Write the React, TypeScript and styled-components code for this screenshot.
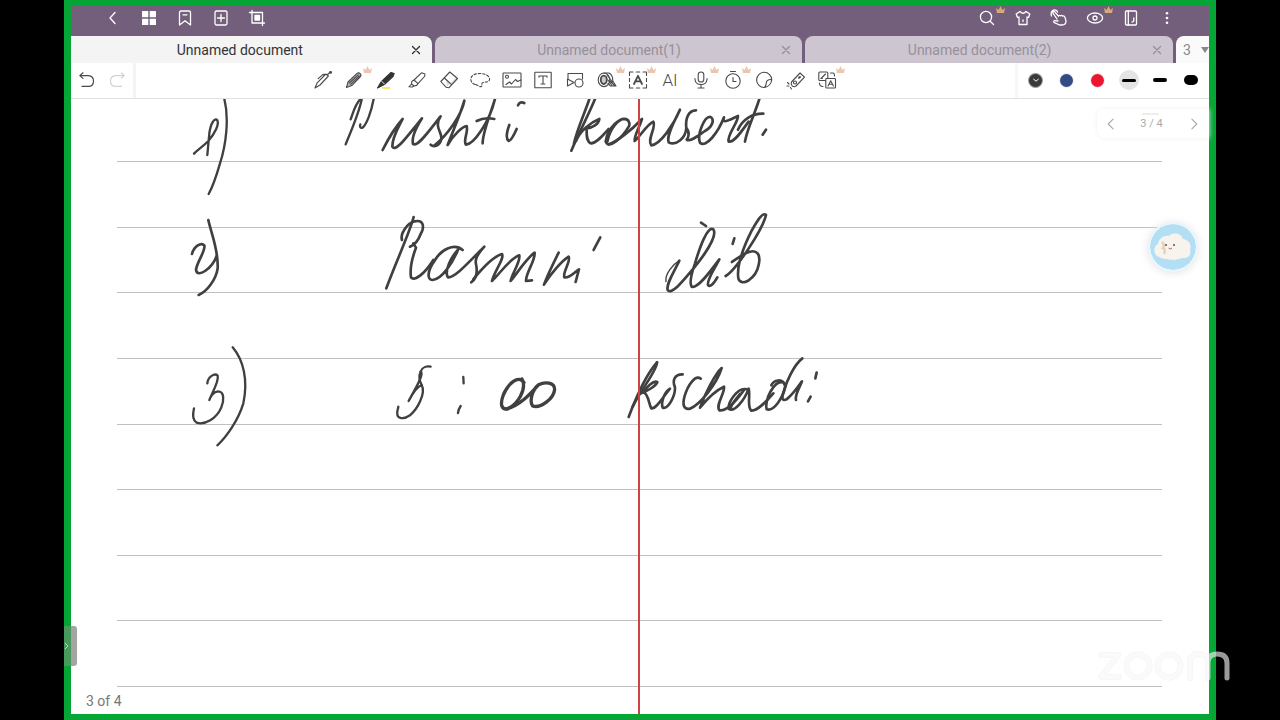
import React from "react";
import styled, { createGlobalStyle, css } from "styled-components";

const GlobalStyle = createGlobalStyle`
  *, *::before, *::after { box-sizing: border-box; }
  body { margin: 0; background: #000; font-family: Roboto, "Liberation Sans", sans-serif; }
  button { font: inherit; color: inherit; border: 0; padding: 0; background: none; cursor: pointer; }
`;

const Stage = styled.div`
  position: relative;
  min-height: 100vh;
  padding: 0 5%;
  display: flex;
`;

const SharedScreen = styled.main`
  position: relative;
  flex: 1;
  min-width: 0;
  display: flex;
  flex-direction: column;
  border: 7px solid #05a536;
  border-top-width: 6px;
  border-bottom-width: 6px;
  background: #fff;
`;

const Header = styled.header`
  display: flex;
  justify-content: space-between;
  height: 30px;
  padding: 0 24px;
  background: #735f7b;
  color: #fff;
`;

const IconGroup = styled.div`
  display: flex;
`;

const HeaderButton = styled.button`
  position: relative;
  display: grid;
  place-items: center;
  width: 36px;
  height: 24px;
`;

const Crown = styled.svg<{ $soft?: boolean }>`
  position: absolute;
  top: 0;
  left: calc(50% + 9px);
  width: 9px;
  height: 8px;
  fill: ${(p) => (p.$soft ? "#ecc5af" : "#d9a878")};
`;

const Tabs = styled.nav`
  display: grid;
  grid-template-columns: 361fr 368fr 368fr 33px;
  gap: 3px;
  height: 27px;
  background: #735f7b;
`;

const Tab = styled.div<{ $active?: boolean }>`
  display: flex;
  align-items: center;
  min-width: 0;
  padding: 0 9px 0 4px;
  border-radius: 8px 8px 0 0;
  background: #cdc6d0;
  color: #97909a;
  ${(p) =>
    p.$active &&
    css`
      padding-left: 0;
      border-radius: 0 8px 0 0;
      background: #f4f4f5;
      color: #333;
    `}
`;

const TabTitle = styled.button`
  flex: 1;
  min-width: 0;
  overflow: hidden;
  white-space: nowrap;
  font-size: 14px;
  line-height: 24px;
`;

const TabClose = styled.button`
  display: grid;
  place-items: center;
  width: 14px;
  height: 20px;
`;

const TabCount = styled.button`
  && {
    display: flex;
    align-items: center;
    justify-content: space-between;
    padding: 0 0 0 7px;
    border-radius: 8px 0 0 0;
    background: #fafafa;
    color: #888;
    font-size: 14px;
  }
`;

const Toolbar = styled.div`
  display: flex;
  height: 36px;
  border-bottom: 1px solid #e2e2e2;
  background: #fff;
  color: #4a4a4a;
`;

const History = styled.div`
  display: flex;
  width: 65px;
  padding: 0 0 1px 1px;
  border-right: 3px solid #f4f4f4;
`;

const ToolArea = styled.div`
  flex: 1;
  min-width: 0;
  display: flex;
  justify-content: center;
  padding: 0 1px 1px 0;
`;

const ToolList = styled.div`
  flex: 0 1 536px;
  display: flex;
`;

const ToolButton = styled.button`
  position: relative;
  flex: 1;
  min-width: 0;
  display: grid;
  place-items: center;
`;

const PenOptions = styled.div`
  display: flex;
  width: 194px;
  padding: 0 0 1px 2px;
  border-left: 3px solid #f7f7f7;
`;

const PenOption = styled.button`
  display: grid;
  place-items: center;
  width: 31px;
`;

const Swatch = styled.span<{ $color: string; $ring?: boolean }>`
  display: grid;
  place-items: center;
  width: 13px;
  height: 13px;
  border-radius: 50%;
  background: ${(p) => p.$color};
  box-shadow: ${(p) => (p.$ring ? "0 0 0 1px #999" : "0 0 0 1px #eee")};
`;

const StrokeChoice = styled.span<{ $selected?: boolean }>`
  display: grid;
  place-items: center;
  width: 20px;
  height: 20px;
  border-radius: 50%;
  background: ${(p) => (p.$selected ? "#e4e4e4" : "transparent")};
`;

const StrokeSample = styled.span<{ $weight: number }>`
  width: 14px;
  height: ${(p) => p.$weight}px;
  border-radius: 5px;
  background: #000;
`;

const Paper = styled.section`
  position: relative;
  flex: 1;
  min-height: 615px;
  display: flex;
  flex-direction: column;
  background: #fff;
`;

const Rule = styled.div<{ $first?: boolean }>`
  flex: ${(p) => (p.$first ? "0 0 63px" : "1 0 auto")};
  margin: 0 47px 0 46px;
  border-bottom: 1px solid #c0c0c0;
`;

const PageFooter = styled.footer`
  height: 27px;
  padding-left: 15px;
  font-size: 14px;
  line-height: 28px;
  color: #777;
`;

const MarginLine = styled.div`
  position: absolute;
  top: 0;
  bottom: 0;
  left: 50%;
  width: 2px;
  margin-left: -2px;
  background: #cf4145;
`;

const Ink = styled.svg`
  position: absolute;
  top: 0;
  left: 0;
  width: 100%;
  height: 615px;
  fill: none;
  stroke: #404040;
  stroke-linecap: round;
  stroke-linejoin: round;
`;

const Pager = styled.div`
  position: absolute;
  top: 10px;
  right: 0;
  display: flex;
  align-items: center;
  justify-content: space-between;
  width: 112px;
  height: 29px;
  padding: 0 10px 0 7px;
  border-radius: 8px 0 0 8px;
  background: #fff;
  box-shadow: 0 0 5px #f0f0f0;
  color: #aaa;
  font-size: 11px;
`;

const PagerButton = styled.button`
  display: grid;
  place-items: center;
  width: 12px;
  height: 20px;
`;

const PagerHandle = styled.span`
  position: absolute;
  top: 4px;
  left: 45px;
  width: 17px;
  height: 2px;
  background: #ededed;
`;

const Assistant = styled.button`
  && {
    position: absolute;
    top: 123px;
    right: 11px;
    width: 50px;
    height: 50px;
    border: 2px solid #e9f6fd;
    border-radius: 50%;
    background: #b2dff4;
    background-clip: padding-box;
    box-shadow: 0 1px 10px #e3e3e3;
  }
`;

const DrawerHandle = styled.button`
  && {
    position: absolute;
    left: -7px;
    bottom: 48px;
    width: 13px;
    height: 40px;
    display: flex;
    align-items: center;
    border-radius: 0 3px 3px 0;
    background: linear-gradient(to right, #479a5c 7px, #a3a5a3 7px);
  }
`;

const Watermark = styled.svg`
  position: absolute;
  right: 48px;
  bottom: 36px;
  width: 136px;
  height: 36px;
  fill: none;
  stroke-linecap: round;
  stroke-linejoin: round;
`;

const Icon = ({ children, size = 20, w = 1.3 }: { children: React.ReactNode; size?: number; w?: number }) => (
  <svg
    width={size}
    height={size}
    viewBox="0 0 20 20"
    fill="none"
    stroke="currentColor"
    strokeWidth={w}
    strokeLinecap="round"
    strokeLinejoin="round"
    aria-hidden="true"
  >
    {children}
  </svg>
);

const CrownBadge = ({ soft }: { soft?: boolean }) => (
  <Crown $soft={soft} viewBox="0 0 9 8" aria-hidden="true">
    <path d="M1 7 L0 2 L2.6 4 L4.5 0 L6.4 4 L9 2 L8 7 Z" />
  </Crown>
);

type Action = { label: string; crown?: boolean; icon: React.ReactNode };

const leftActions: Action[] = [
  { label: "Back", icon: <path d="M12 4.5 L7 10 L12 15.5" /> },
  {
    label: "Page overview",
    icon: (
      <g fill="currentColor" stroke="none">
        <rect x="3" y="3" width="6.3" height="6.3" rx=".6" />
        <rect x="10.7" y="3" width="6.3" height="6.3" rx=".6" />
        <rect x="3" y="10.7" width="6.3" height="6.3" rx=".6" />
        <rect x="10.7" y="10.7" width="6.3" height="6.3" rx=".6" />
      </g>
    ),
  },
  { label: "Bookmark", icon: <path d="M4.5 4.5 Q4.5 3 6 3 H14 Q15.5 3 15.5 4.5 V17 L10 12.8 L4.5 17 Z M8 6.8 H12" /> },
  {
    label: "Add page",
    icon: (
      <>
        <rect x="4" y="3" width="12" height="14" rx="1.5" />
        <path d="M10 6.5 V13.5 M6.5 10 H13.5" />
      </>
    ),
  },
  {
    label: "Crop",
    icon: (
      <>
        <path d="M5 2.5 V15 H17.5 M2.5 4.5 H15.5 V17.5" />
        <rect x="8" y="7.5" width="4.5" height="4.5" fill="currentColor" />
      </>
    ),
  },
];

const rightActions: Action[] = [
  {
    label: "Search",
    crown: true,
    icon: (
      <>
        <circle cx="9" cy="9" r="5.6" />
        <path d="M13.2 13.2 L16.5 16.5" />
      </>
    ),
  },
  {
    label: "Themes",
    icon: <path d="M7 3.5 Q10 7 13 3.5 L16.8 6 L15.5 9.5 L14 9 V16.5 H6 V9 L4.5 9.5 L3.2 6 Z M10 12 V13.5" />,
  },
  {
    label: "Gestures",
    icon: (
      <path d="M8 11 L3.8 4.8 Q3.8 3 5.6 3.6 L9.4 8.2 Q10 6.8 11.4 7.8 Q12.6 6.8 13.6 8 Q15.4 7.6 16 9.4 L17 13 Q17 17 13 17 H10.5 L5 14.3 Q4 12.6 6 12.6 L9 13 M2.5 8 Q1 3 5 1.8 Q8 1.6 8.6 4" />
    ),
  },
  {
    label: "View mode",
    crown: true,
    icon: (
      <>
        <ellipse cx="10" cy="10" rx="7.6" ry="5" />
        <circle cx="10" cy="10" r="2" />
      </>
    ),
  },
  {
    label: "Document",
    icon: (
      <>
        <rect x="4.5" y="3" width="11" height="14" rx="1" />
        <path d="M7.3 3 V17 M12.8 10 V12.5 Q12.8 14 11 14" />
      </>
    ),
  },
  {
    label: "More",
    icon: (
      <g fill="currentColor" stroke="none">
        <circle cx="10" cy="5.2" r="1.3" />
        <circle cx="10" cy="10" r="1.3" />
        <circle cx="10" cy="14.8" r="1.3" />
      </g>
    ),
  },
];

const tools: Action[] = [
  {
    label: "Fountain pen",
    icon: (
      <>
        <path d="M2 18 L4.2 12.8 L12.8 4 L15.4 6 L7 15 Z M14.2 5 L17 2.2 M5.2 8.6 L10 4.4 L12.4 4.6" />
        <circle cx="17.6" cy="2.4" r=".9" fill="currentColor" />
      </>
    ),
  },
  {
    label: "Pencil",
    crown: true,
    icon: (
      <>
        <path d="M2.5 17.5 L4 12 L12.8 3.6 Q14.6 2 16.2 3.6 Q17.8 5.4 16 7 L7.8 15.6 Z" fill="#bbb" />
        <path d="M5.4 13 L14.2 4.8 M6.6 14.4 L15.4 6" />
      </>
    ),
  },
  {
    label: "Ballpoint pen",
    icon: (
      <>
        <path d="M6.5 18 H13.5" stroke="#f0e63c" strokeWidth="1.6" />
        <path d="M1.5 18 L5 12 L15 2.4 L18.2 3.4 L17 6.6 L8.4 14.6 Z" fill="#333" stroke="#333" />
        <path d="M5.8 11.4 L8.4 14" stroke="#fff" strokeWidth=".9" />
      </>
    ),
  },
  {
    label: "Highlighter",
    icon: <path d="M7 10 L14.5 2.8 L18 4 L17.5 6.5 L11 13.6 Z M7 10 L4.8 11.5 L4.5 14 L7.2 16 L9.6 15.4 L11 13.6 M4.5 14 L2 16.8 L5.3 17 L7 16" />,
  },
  {
    label: "Eraser",
    icon: (
      <>
        <path d="M6.5 8 L12.5 14 L18 8.5 L17 7 L8 17 Z" fill="#ddd" stroke="none" />
        <path d="M1.8 11.5 L10.8 2 L18.5 8.5 L9.8 17.8 L7 17.2 Z M5.4 8 L12.6 14.6" />
      </>
    ),
  },
  {
    label: "Lasso",
    icon: (
      <path
        d="M5 14.5 C-1 12.5 -1 4.5 8 3.6 C15 3 20.5 6 19.4 10 C18 13 15 11.5 13 12.5 C10.5 14 13 15 11.5 16.4 C9 17.5 8 14.5 5 14.5 Z"
        strokeDasharray="2.4 1.9"
      />
    ),
  },
  {
    label: "Image",
    icon: (
      <>
        <rect x="1" y="3" width="18" height="14" rx=".6" />
        <circle cx="5" cy="6.8" r="1.5" />
        <path d="M4 14.5 L7.5 12 L9.5 14 L13.5 9.5 L15.5 11.5 L19 10" />
      </>
    ),
  },
  {
    label: "Text box",
    icon: (
      <>
        <rect x="1.8" y="2.2" width="16.4" height="15.6" rx=".4" />
        <path d="M6 7.2 V6 H14 V7.2 M10 6 V14 M8 14 H12" />
      </>
    ),
  },
  {
    label: "Shapes",
    icon: (
      <>
        <path d="M3 9 V3.5 H17.5 V9 M2.5 9 V16 L9 12.5 Z" />
        <circle cx="14" cy="13" r="4" />
      </>
    ),
  },
  {
    label: "Tape",
    crown: true,
    icon: (
      <>
        <ellipse cx="7" cy="9.8" rx="5.8" ry="6.8" />
        <ellipse cx="6.8" cy="9.8" rx="3" ry="4.2" fill="#ccc" strokeWidth="1.8" />
        <path d="M7 3 H12 Q16 5 15.8 11 L19 16 H13.5 L11 13.5 M10 5 L15.5 12 M11 10 L15 15.5 M13 11 L17.5 15.5" />
      </>
    ),
  },
  {
    label: "Text recognition",
    crown: true,
    icon: (
      <>
        <path d="M1.5 5.5 V2 H5 M8.3 2 H11.7 M15 2 H18.5 V5.5 M18.5 8.4 V11.6 M18.5 14.5 V18 H15 M11.7 18 H8.3 M5 18 H1.5 V14.5 M1.5 11.6 V8.4" />
        <path d="M6 14 L10 5.8 L14 14 M7.4 11.4 H12.6" strokeWidth="1.8" />
      </>
    ),
  },
  { label: "AI", icon: <AiLabel /> },
  {
    label: "Record",
    crown: true,
    icon: (
      <>
        <rect x="7.2" y="2" width="5.6" height="10" rx="2.8" />
        <path d="M4 8.5 V9.5 Q4.5 14.5 10 14.5 Q15.5 14.5 16 9.5 V8.5 M10 14.5 V18 M7 18 H13" />
      </>
    ),
  },
  {
    label: "Timer",
    crown: true,
    icon: (
      <>
        <circle cx="10" cy="11" r="7.2" />
        <path d="M7.5 1.5 H12.5 M10 7.5 V11.5 H13" />
      </>
    ),
  },
  {
    label: "Sticker",
    icon: <path d="M10.5 17.5 A7.6 7.6 0 1 1 17.8 10 Q16 8.8 13.5 10.5 Q12.5 11 12.3 13 Q12 16 10.5 17.5 Q16.5 16.5 17.8 10" />,
  },
  {
    label: "Laser pointer",
    icon: (
      <>
        <path d="M5.5 12 L14 3 L18.5 7.2 L10 16 Q8 17.5 6.2 15.8 Q4.5 14 5.5 12 Z M1.5 12.5 L3 14 M1 16 L3 16 M4.5 17.5 L5.5 19" />
        <circle cx="9" cy="12.5" r="1.5" />
        <path d="M13 7.8 L14 7" strokeWidth="2" />
      </>
    ),
  },
  {
    label: "Translate",
    crown: true,
    icon: (
      <>
        <rect x="1.8" y="2" width="9" height="8.5" rx="1" />
        <path d="M4 8.5 L8.5 4 M4 8.5 L5.5 8.3 M13.5 3 H16 Q17.5 3 17.5 6 M2.5 13 Q2.5 16.5 6 16.5" />
        <rect x="8.8" y="8.5" width="9.7" height="9.5" rx=".8" fill="#fff" />
        <path d="M11 16 L13.7 10.8 L16.4 16 M12 14.3 H15.4" />
      </>
    ),
  },
];

function AiLabel() {
  return (
    <text x="10" y="16" textAnchor="middle" fontSize="17" fontWeight="300" fill="currentColor" stroke="none">
      AI
    </text>
  );
}

/* Pen strokes of the page, grouped by word; each group has its own origin, at a third of screen scale. */
const ink: { x: number; y: number; width: number; strokes: string[] }[] = [
  {
    x: 109, y: -4, width: 7,
    strokes: [
      "M42 176 C55 162 72 152 85 138 C105 115 118 88 112 76 C104 66 92 85 88 115 L82 180",
      "M133 12 C148 70 138 150 120 205 C110 240 98 275 86 297",
      "M545 14 C535 60 510 115 497 148",
      "M512 73 C520 52 526 25 542 12",
      "M581 12 C574 50 560 88 548 98 C541 101 539 94 541 88",
    ],
  },
  {
    x: 109, y: -4, width: 8,
    strokes: [
      "M608 165 C628 125 650 92 668 72 C654 100 636 128 637 155 C648 174 686 118 726 70 C706 102 694 128 699 147 C714 158 752 100 782 64 C760 96 788 112 784 132 C780 152 762 158 752 149",
      "M764 151 C800 122 846 60 853 17 C840 62 818 110 803 150 C820 120 848 94 860 93 C866 112 848 136 858 149 C880 148 928 84 945 12 C930 62 908 112 908 145",
      "M890 78 C905 70 925 68 943 72",
      "M988 90 C980 112 978 132 986 138 C995 136 1003 118 1010 102",
    ],
  },
  {
    x: 429, y: -4, width: 8,
    strokes: [
      "M54 31 C58 22 64 20 73 24",
      "M285 12 C268 55 238 110 214 167",
      "M268 12 C254 55 232 100 222 145",
      "M228 138 C240 108 272 82 298 72 C296 88 278 98 260 100 C260 118 258 138 272 145 C288 146 308 122 326 102",
      "M384 75 C362 60 322 100 317 140 C326 165 366 130 388 92 C390 70 368 62 345 90 C332 105 326 122 322 140",
      "M326 148 C350 140 392 108 426 72 C418 98 402 122 404 138 C418 128 440 88 460 80 C470 95 440 135 454 151 C482 148 520 90 540 44 C526 75 498 120 506 142 C528 154 556 130 559 100 C556 72 564 46 588 46",
      "M559 100 C570 110 566 128 560 134 C570 142 594 122 615 108 C636 96 645 75 632 66 C614 62 590 118 600 143 C618 160 655 112 672 67 C668 80 674 82 690 74 L714 63 C714 85 680 120 686 140 C704 144 730 100 746 80",
      "M778 12 C765 55 740 105 735 140",
      "M714 104 C728 72 758 55 790 56",
      "M798 104 L788 119",
    ],
  },
  {
    x: 109, y: 101, width: 8,
    strokes: [
      "M36 162 C42 138 64 126 73 136 C78 152 50 186 48 210 C52 236 96 206 110 168",
      "M85 60 C94 102 116 150 113 205 C108 240 80 275 56 285",
      "M701 51 C690 96 646 190 619 265",
      "M666 120 C660 100 682 70 704 64 C732 58 734 82 722 102 C715 122 704 134 690 140",
      "M700 130 L708 143 C696 175 690 212 693 232 C704 246 735 220 760 180",
      "M848 150 C822 128 782 150 764 182 C742 212 740 240 758 240 C786 238 818 188 835 148 C812 172 792 215 804 232 C826 234 872 180 913 140 C894 162 884 176 888 192 C894 218 888 236 874 247",
      "M880 238 C906 206 938 170 966 162 C974 176 944 212 936 243 C956 226 988 176 1018 166 C1022 186 998 216 992 243 C1010 222 1038 176 1064 158 C1066 184 1038 216 1038 243 L1056 241",
      "M1136 158 C1120 190 1104 222 1092 254 C1112 222 1144 184 1166 170 C1174 184 1148 214 1153 232 C1168 236 1182 218 1197 208 L1187 246",
      "M1261 112 L1241 150",
    ],
  },
  {
    x: 549, y: 101, width: 8,
    strokes: [
      "M243 68 L258 78",
      "M178 182 C160 220 138 252 143 270 C154 286 190 242 215 212 C250 170 294 108 280 88 C262 78 240 140 225 190 C214 222 208 250 215 260 C235 268 276 206 298 178 C284 206 260 240 264 255 C272 264 284 246 292 232",
      "M343 115 L338 132",
      "M317 228 C346 212 428 90 438 45 C428 34 410 66 395 92 C370 142 350 200 355 235 C364 264 408 235 416 195 C424 160 408 150 390 155 C370 160 352 176 336 186",
    ],
  },
  {
    x: 549, y: 101, width: 4,
    strokes: ["M138 245 C134 222 158 194 178 182"],
  },
  {
    x: 109, y: 241, width: 7,
    strokes: [
      "M82 130 C84 110 104 98 113 107 C118 122 98 156 88 180 C92 168 102 156 114 154 C134 154 132 182 124 202 C110 236 74 256 50 248 C36 240 38 222 42 205",
      "M158 22 C190 60 205 120 190 190 C175 240 140 290 112 316",
      "M752 80 C740 78 726 82 722 95 C734 100 706 146 686 183 C698 160 712 140 725 135 C738 158 714 206 690 226 C670 240 652 235 652 222 C650 214 655 206 655 200",
      "M722 95 C716 108 718 122 725 135",
      "M850 111 L851 130",
      "M842 198 C838 204 835 212 834 219",
    ],
  },
  {
    x: 109, y: 241, width: 10,
    strokes: [
      "M1032 128 C1016 102 984 132 970 165 C960 192 964 208 980 207 C1012 196 1042 148 1026 117",
      "M980 207 C1022 196 1052 160 1076 134 C1056 150 1048 184 1058 198 C1082 206 1122 176 1124 148 C1124 128 1096 124 1076 134",
    ],
  },
  {
    x: 529, y: 241, width: 8,
    strokes: [
      "M171 67 C142 100 108 172 86 231",
      "M171 67 C172 90 126 144 98 200",
      "M118 162 C142 154 168 138 172 126 C160 120 140 142 130 156 C146 162 146 192 154 205 C168 208 188 172 210 146 C194 154 182 186 188 203 C206 208 226 166 225 142 C216 122 224 102 248 103",
      "M302 116 C286 104 264 134 254 168 C246 196 252 210 270 206 C300 194 350 132 365 84 C346 100 314 164 300 203 C320 178 350 150 372 140 C376 158 346 194 358 211 C380 214 408 184 432 150",
      "M440 148 C414 140 384 186 386 206 C402 220 434 180 446 146 C452 166 440 200 454 212 C474 214 500 182 520 160",
      "M420 162 C408 176 396 190 392 204",
      "M552 128 C522 116 492 184 500 208 C520 216 548 176 556 140 C548 110 520 122 514 136",
      "M607 55 C580 76 558 130 552 152 C544 176 546 184 560 178 C578 164 592 144 606 124 C598 146 584 164 588 180",
      "M650 98 L646 115",
      "M632 170 L624 184",
    ],
  },
];

const CloseIcon = () => (
  <Icon size={14} w={2}>
    <path d="M5 5 L15 15 M15 5 L5 15" />
  </Icon>
);

const HeaderActions = ({ items }: { items: Action[] }) => (
  <IconGroup>
    {items.map((a) => (
      <HeaderButton key={a.label} type="button" aria-label={a.label}>
        <Icon>{a.icon}</Icon>
        {a.crown && <CrownBadge />}
      </HeaderButton>
    ))}
  </IconGroup>
);

export default function App() {
  return (
    <>
      <GlobalStyle />
      <Stage>
        <SharedScreen>
          <Header>
            <HeaderActions items={leftActions} />
            <HeaderActions items={rightActions} />
          </Header>

          <Tabs aria-label="Open documents">
            {["Unnamed document", "Unnamed document(1)", "Unnamed document(2)"].map((title, i) => (
              <Tab key={title} $active={i === 0}>
                <TabTitle type="button">{title}</TabTitle>
                <TabClose type="button" aria-label={`Close ${title}`}>
                  <CloseIcon />
                </TabClose>
              </Tab>
            ))}
            <TabCount type="button" aria-label="3 open tabs">
              3
              <svg width="8" height="6" viewBox="0 0 8 6" aria-hidden="true">
                <path d="M0 0 H8 L4 6 Z" fill="#888" />
              </svg>
            </TabCount>
          </Tabs>

          <Toolbar>
            <History>
              <PenOption type="button" aria-label="Undo">
                <Icon w={1.2}>
                  <path d="M6 2.8 L2.8 5.6 L6 8.4 M3 5.6 H11.5 Q16.5 6 16.5 11 Q16.5 16.4 11.5 16.4 H5" />
                </Icon>
              </PenOption>
              <PenOption type="button" aria-label="Redo" disabled>
                <svg width="20" height="20" viewBox="0 0 20 20" fill="none" stroke="#d2d2d2" strokeWidth="1.2" aria-hidden="true">
                  <path d="M13 2.8 L16.2 5.6 L13 8.4 M16 5.6 H7.5 Q2.5 6 2.5 11 Q2.5 16.4 7.5 16.4 H14" />
                </svg>
              </PenOption>
            </History>
            <ToolArea>
              <ToolList>
                {tools.map((t) => (
                  <ToolButton key={t.label} type="button" aria-label={t.label}>
                    <Icon w={1.1}>{t.icon}</Icon>
                    {t.crown && <ToolCrown />}
                  </ToolButton>
                ))}
              </ToolList>
            </ToolArea>
            <PenOptions>
              <PenOption type="button" aria-label="Dark grey ink">
                <Swatch $color="#3a3a3a" $ring>
                  <Icon size={8} w={2.5}>
                    <path d="M4 8 L10 13 L16 8" stroke="#fff" />
                  </Icon>
                </Swatch>
              </PenOption>
              <PenOption type="button" aria-label="Blue ink">
                <Swatch $color="#344a85" />
              </PenOption>
              <PenOption type="button" aria-label="Red ink">
                <Swatch $color="#ee1530" />
              </PenOption>
              {[3, 4, 10].map((weight, i) => (
                <PenOption key={weight} type="button" aria-label={`Line weight ${i + 1}`}>
                  <StrokeChoice $selected={i === 0}>
                    <StrokeSample $weight={weight} />
                  </StrokeChoice>
                </PenOption>
              ))}
            </PenOptions>
          </Toolbar>

          <Paper>
            {Array.from({ length: 9 }, (_, i) => (
              <Rule key={i} $first={i === 0} />
            ))}
            <PageFooter>3 of 4</PageFooter>
            <Ink role="img" aria-label="Handwritten notes">
              {ink.map((group, i) => (
                <g key={i} transform={`translate(${group.x} ${group.y}) scale(0.3333)`} strokeWidth={group.width}>
                  {group.strokes.map((d) => (
                    <path key={d} d={d} />
                  ))}
                </g>
              ))}
            </Ink>
            <MarginLine />
            <Pager>
              <PagerHandle />
              <PagerButton type="button" aria-label="Previous page">
                <Icon size={14} w={1.6}>
                  <path d="M13 3 L6 10 L13 17" />
                </Icon>
              </PagerButton>
              <span>3 / 4</span>
              <PagerButton type="button" aria-label="Next page">
                <Icon size={14} w={1.6}>
                  <path d="M7 3 L14 10 L7 17" />
                </Icon>
              </PagerButton>
            </Pager>
            <Assistant type="button" aria-label="Assistant">
              <svg width="46" height="46" viewBox="0 0 46 46" aria-hidden="true">
                <path
                  d="M9 33 C3 31 3 22 8 20 C9 14 14 11 19 12 C23 8 31 9 33 15 C39 16 42 21 40 25 C42 31 38 35 32 34 C26 37 15 36 9 33 Z"
                  fill="#f8f3ed"
                />
                <path d="M12 18 q3 3 1 6 q3 1 1 6" stroke="#e6d2b4" strokeWidth="2.5" fill="none" />
                <circle cx="16" cy="21" r="1" fill="#555" />
                <circle cx="24" cy="21" r="1" fill="#555" />
                <path d="M18.5 24 Q20 26 22 24" stroke="#b86d5d" fill="none" />
              </svg>
            </Assistant>
            <DrawerHandle type="button" aria-label="Open side panel">
              <svg width="6" height="8" viewBox="0 0 6 8" fill="none" stroke="#a5e0b0" aria-hidden="true">
                <path d="M1 1 L4 4 L1 7" />
              </svg>
            </DrawerHandle>
          </Paper>
        </SharedScreen>
        <Watermark viewBox="0 0 136 36" role="img" aria-label="zoom">
          <g stroke="#000" strokeOpacity=".05" strokeWidth="6">
            <ZoomMark />
          </g>
          <g stroke="#fff" strokeOpacity=".6" strokeWidth="5">
            <ZoomMark />
          </g>
        </Watermark>
      </Stage>
    </>
  );
}

const SoftCrown = styled.span`
  position: absolute;
  top: 3px;
  left: 0;
  right: 0;
  height: 9px;
`;

function ToolCrown() {
  return (
    <SoftCrown>
      <CrownBadge soft />
    </SoftCrown>
  );
}

function ZoomMark() {
  return (
    <>
      <path d="M5 7 H22 L5 29 H23" />
      <circle cx="42" cy="18" r="11.5" />
      <circle cx="73" cy="18" r="11.5" />
      <path d="M94 30 V15 Q94 6 103 6 Q112 6 112 15 V30 M112 15 Q112 6 121 6 Q131 6 131 15 V30" />
    </>
  );
}
